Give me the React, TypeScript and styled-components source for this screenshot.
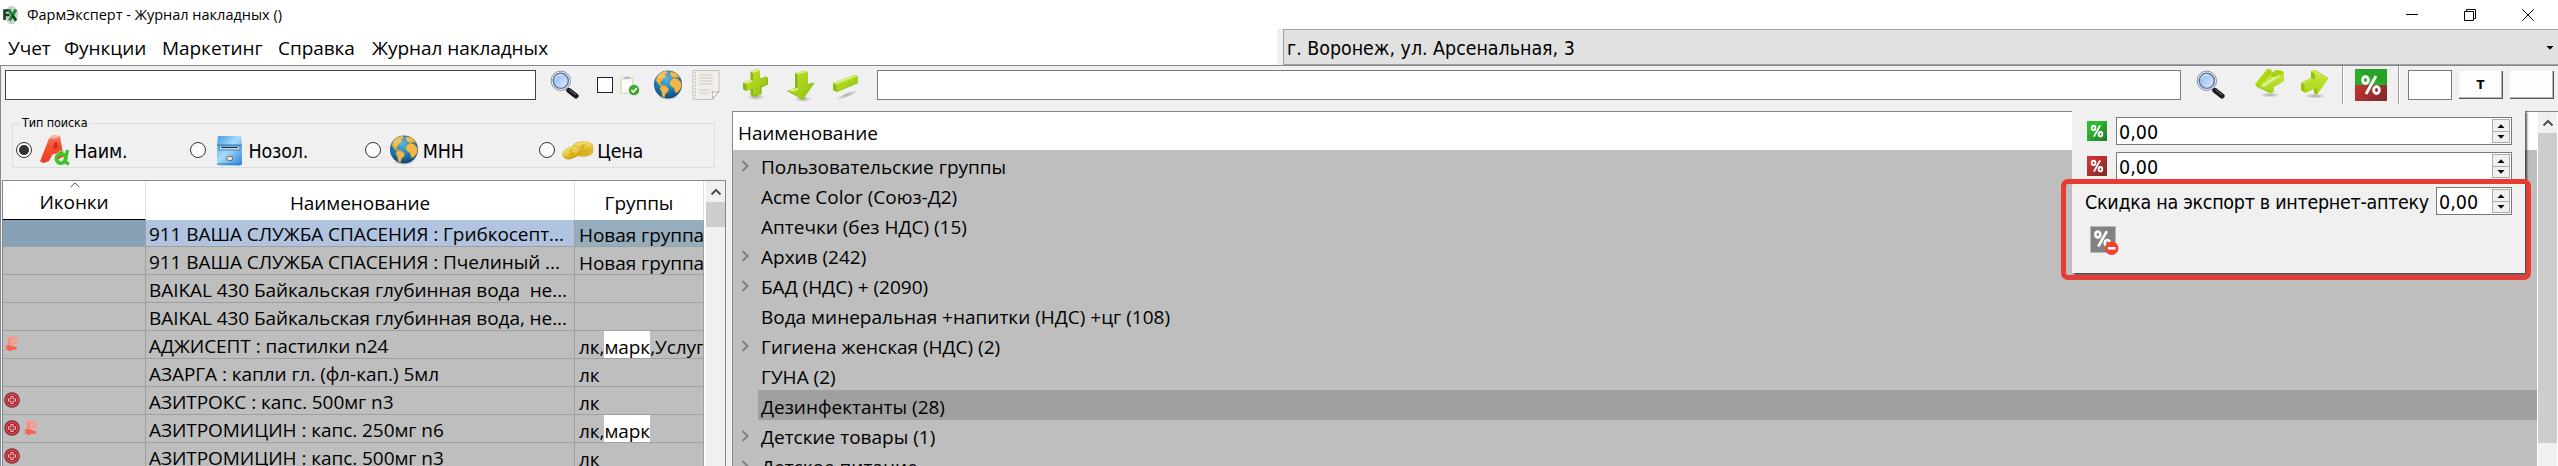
import React from "react";
import styled, { createGlobalStyle } from "styled-components";

const ui = `"Open Sans", "Noto Sans", sans-serif`;
const tahoma = `"DejaVu Sans Condensed", "DejaVu Sans", sans-serif`;
const line = "#828790";

const Global = createGlobalStyle`
  * { box-sizing: border-box; }
  body { margin: 0; background: #fff; color: #000; }
  svg { display: block; flex: none; }
`;

const Window = styled.div`
  position: relative;
  display: flex;
  flex-direction: column;
  width: 2558px;
  height: 466px;
  overflow: hidden;
  font-family: ${ui};
  font-size: 19px;
  white-space: pre;
`;

const TitleBar = styled.header`
  display: flex;
  align-items: center;
  height: 29px;
  padding-left: 3px;
  flex: none;
`;
const Title = styled.span`
  flex: 1;
  margin-left: 8px;
  font-size: 14.5px;
`;
const Controls = styled.div`
  display: flex;
  gap: 46px;
  padding-right: 24px;
`;

const MenuRow = styled.div`
  display: flex;
  height: 36px;
  flex: none;
`;
const Menu = styled.nav`
  display: flex;
  align-items: center;
  width: 1277px;
  padding: 2px 0 0 8px;
  letter-spacing: -0.05px;
`;
const MenuItem = styled.span<{ $w: number }>`
  width: ${(p) => p.$w}px;
`;
const Combo = styled.div`
  display: flex;
  flex: 1;
  align-items: center;
  justify-content: space-between;
  padding: 2px 4px 0 3px;
  background: #e1e1e1;
  border: 1px solid #a0a0a0;
  border-right: 0;
  outline: 6px solid #f0f0f0;
  clip-path: inset(0 0 0 -6px);
  margin-left: 6px;
  font-family: ${tahoma};
  font-size: 19.4px;
`;

const Body = styled.main`
  display: flex;
  flex-direction: column;
  flex: 1;
  min-height: 0;
  background: #f0f0f0;
  border-top: 1px solid ${line};
  border-left: 1px solid ${line};
`;
const Toolbar = styled.div`
  display: flex;
  align-items: flex-start;
  height: 45px;
  padding: 4px 0 0 4px;
  flex: none;
`;
const Field = styled.div<{ $w: number; $dark?: boolean }>`
  width: ${(p) => p.$w}px;
  height: 30px;
  background: #fff;
  border: 1px solid ${(p) => (p.$dark ? "#444" : "#7a7a7a")};
  flex: none;
`;
const Tool = styled.span<{ $gap: number; $top?: number }>`
  margin-left: ${(p) => p.$gap}px;
  margin-top: ${(p) => p.$top ?? 0}px;
  flex: none;
`;
const Check = styled.span`
  display: block;
  width: 16px;
  height: 16px;
  background: #fff;
  border: 1px solid #222;
`;
const Divider = styled.div`
  width: 2px;
  height: 38px;
  margin-top: -4px;
  background: #a0a0a0;
  border-right: 1px solid #fff;
`;
const PushButton = styled.div`
  display: flex;
  align-items: center;
  justify-content: center;
  width: 44px;
  height: 28px;
  margin: 1px 0 0 7px;
  background: #fdfdfd;
  border-right: 1px solid #555;
  border-bottom: 1px solid #555;
  box-shadow: inset -1px -1px #b4b4b4;
  font: bold 13px ${tahoma};
  flex: none;
`;

const Panels = styled.div`
  display: flex;
  flex: 1;
  min-height: 0;
`;
const Left = styled.section`
  display: flex;
  flex-direction: column;
  width: 731px;
  flex: none;
`;
const Group = styled.fieldset`
  display: flex;
  height: 54px;
  margin: 3px 17px 0 11px;
  padding: 0;
  border: 1px solid #dcdcdc;
  font-family: ${tahoma};
  font-size: 19.5px;
  letter-spacing: -0.15px;
  min-width: 0;
`;
const Legend = styled.legend`
  margin-left: 7px;
  padding: 0 2px;
  line-height: 18px;
  font-size: 12.5px;
  letter-spacing: -0.1px;
`;
const Option = styled.label`
  display: flex;
  align-items: center;
  width: 174.4px;
  height: 36px;
  padding-left: 3px;
  flex: none;
`;
const Radio = styled.span<{ $on?: boolean }>`
  width: 16px;
  height: 16px;
  border: 1px solid #333;
  border-radius: 50%;
  background: ${(p) => (p.$on ? "radial-gradient(circle, #333 4.6px, #fff 5.4px)" : "#fff")};
`;
const OptionIcon = styled.span`
  display: flex;
  justify-content: center;
  width: 32px;
  margin-left: 7px;
`;
const OptionText = styled.span`
  padding: 2px 0 0 3px;
`;

const Table = styled.div`
  display: grid;
  grid-template-columns: 1fr 19px;
  flex: 1;
  min-height: 0;
  margin: 12px 6px 0 1px;
  border: 1px solid ${line};
  border-bottom: 0;
  background: #fff;
`;
const Grid = styled.div`
  display: grid;
  grid-template-columns: 143px 429px 129px;
  grid-template-rows: 39px 27px;
  grid-auto-rows: 28px;
  width: 701px;
  min-height: 0;
  overflow: hidden;
  letter-spacing: -0.06px;
`;
const HeadCell = styled.div<{ $active?: boolean }>`
  position: relative;
  display: flex;
  align-items: center;
  justify-content: center;
  padding-top: 4px;
  background: #fff;
  border-right: 1px solid #e0e0e0;
  border-bottom: ${(p) => (p.$active ? "1px solid #000" : "0")};
`;
const SortMark = styled.span`
  position: absolute;
  top: 1px;
  left: 67px;
`;
const Cell = styled.div<{ $bg?: string; $drop?: number }>`
  display: flex;
  align-items: center;
  padding: ${(p) => p.$drop ?? 2}px 0 0 ${(p) => (p.$drop ? 4 : 3)}px;
  background: ${(p) => p.$bg ?? "#bebebe"};
  border-right: 1px solid #a0a0a0;
  border-bottom: 1px solid #a0a0a0;
  overflow: hidden;
`;
const IconCell = styled(Cell)`
  gap: 3px;
  padding: 0 0 1px 1px;
`;
const Mark = styled.span`
  display: flex;
  align-items: center;
  height: 28px;
  margin-top: -4px;
  padding-top: 4px;
  background: #fff;
`;

const Scroll = styled.div`
  display: flex;
  flex-direction: column;
  background: #f0f0f0;
`;
const ScrollButton = styled.div`
  display: flex;
  align-items: center;
  justify-content: center;
  height: 21px;
  flex: none;
`;
const Thumb = styled.div<{ $h: number }>`
  height: ${(p) => p.$h}px;
  background: #cdcdcd;
`;

const Tree = styled.section`
  display: grid;
  grid-template-columns: 1804px 1px 19px;
  flex: 1;
  border-top: 1px solid ${line};
  border-left: 1px solid ${line};
  background: #fff;
  min-height: 0;
  overflow: hidden;
`;
const TreeList = styled.div`
  background: #bebebe;
  min-height: 0;
`;
const TreeHead = styled.div`
  display: flex;
  align-items: center;
  height: 38px;
  padding: 3px 0 0 5px;
  background: #fff;
  letter-spacing: -0.1px;
`;
const TreeRow = styled.div`
  display: flex;
  height: 30px;
`;
const Twist = styled.span`
  width: 25px;
  padding: 10px 0 0 8px;
  flex: none;
`;
const TreeLabel = styled.span<{ $on?: boolean }>`
  display: flex;
  align-items: center;
  flex: 1;
  padding: 3px 0 0 3px;
  background: ${(p) => (p.$on ? "#a0a0a0" : "transparent")};
`;

const Popup = styled.aside`
  position: absolute;
  left: 2072px;
  top: 110px;
  display: flex;
  flex-direction: column;
  gap: 7px;
  width: 453px;
  height: 163px;
  padding: 7px 13px 0 15px;
  background: #f0f0f0;
  box-shadow: 2px 2px 2px rgba(0, 0, 0, 0.65);
  clip-path: inset(0 -6px -6px 0);
  font-family: ${tahoma};
  font-size: 19.5px;
`;
const PopupRow = styled.div`
  display: flex;
  align-items: center;
  justify-content: space-between;
  height: 28px;
  flex: none;
`;
const PopupText = styled.span`
  margin-left: -2px;
  padding-top: 2px;
  letter-spacing: -0.29px;
`;
const Spin = styled.div<{ $w: number }>`
  display: flex;
  justify-content: space-between;
  width: ${(p) => p.$w}px;
  height: 28px;
  padding: 1px;
  background: #fff;
  border: 1px solid #7a7a7a;
`;
const SpinValue = styled.span`
  padding-left: 1px;
  line-height: 27px;
`;
const SpinButtons = styled.span`
  display: grid;
  grid-template-rows: 1fr 1fr;
  width: 18px;
  border: 1px solid #acacac;
  background: #f0f0f0;
`;
const SpinButton = styled.span`
  display: flex;
  align-items: center;
  justify-content: center;
  & + & { border-top: 1px solid #acacac; }
`;
const PopupAction = styled.div`
  margin: 4px 0 0 3px;
`;
const Highlight = styled.div`
  position: absolute;
  left: 2061px;
  top: 179px;
  width: 470px;
  height: 101px;
  border: 5px solid #e63c31;
  border-radius: 7px;
`;
const Palette = styled.svg`
  position: absolute;
`;

const Defs = () => (
  <Palette width="0" height="0">
    <defs>
      <linearGradient id="lime" x1="0" y1="0" x2="1" y2="1">
        <stop offset="0" stopColor="#c3e52a" /><stop offset="1" stopColor="#8dbf12" />
      </linearGradient>
      <linearGradient id="limeLight" x1="0" y1="0" x2="0" y2="1">
        <stop offset="0" stopColor="#c9e645" /><stop offset="1" stopColor="#a8d414" />
      </linearGradient>
      <linearGradient id="gGreen" x1="0" y1="0" x2="1" y2="1">
        <stop offset="0.3" stopColor="#2fbb2f" /><stop offset="1" stopColor="#267326" />
      </linearGradient>
      <linearGradient id="gRed" x1="0" y1="0" x2="1" y2="1">
        <stop offset="0.2" stopColor="#cc3333" /><stop offset="1" stopColor="#7b2b2b" />
      </linearGradient>
      <radialGradient id="sea" cx="0.45" cy="0.35" r="0.65">
        <stop offset="0" stopColor="#3fb4dd" /><stop offset="0.6" stopColor="#1a79ac" /><stop offset="1" stopColor="#0c4a78" />
      </radialGradient>
      <linearGradient id="glass" x1="0" y1="0" x2="1" y2="1">
        <stop offset="0" stopColor="#8db4ea" /><stop offset="1" stopColor="#e2edfb" />
      </linearGradient>
      <linearGradient id="gold" x1="0" y1="0" x2="0" y2="1">
        <stop offset="0" stopColor="#fbe774" /><stop offset="1" stopColor="#d9ac17" />
      </linearGradient>
      <linearGradient id="cab" x1="0" y1="0" x2="1" y2="1">
        <stop offset="0" stopColor="#3f9fe8" /><stop offset="0.45" stopColor="#a9daf9" /><stop offset="1" stopColor="#2b83dc" />
      </linearGradient>
      <linearGradient id="aRed" x1="0" y1="0" x2="0" y2="1">
        <stop offset="0" stopColor="#f3806b" /><stop offset="0.4" stopColor="#f5502c" /><stop offset="1" stopColor="#ee3d22" />
      </linearGradient>
      <radialGradient id="shade"><stop offset="0" stopColor="#000" stopOpacity="0.3" /><stop offset="1" stopColor="#000" stopOpacity="0" /></radialGradient>
    </defs>
  </Palette>
);

const Logo = () => (
  <svg width="16" height="20" viewBox="0 0 16 20">
    <ellipse cx="8.5" cy="10" rx="6.6" ry="9.3" fill="#cfcfcf" />
    <path d="M1.5 15V5.5h6M1.5 10h5" fill="none" stroke="#123c1c" strokeWidth="2.6" />
    <path d="M6 5l7 10.5M13 4.5L6.5 15.5" fill="none" stroke="#178a37" strokeWidth="3" />
    <path d="M9 10l4 5.5" stroke="#0b3a18" strokeWidth="2" />
  </svg>
);
const Lens = () => (
  <svg width="30" height="30" viewBox="0 0 30 30">
    <path d="M16 18l3.500 3" stroke="#999" strokeWidth="3" />
    <path d="M19 20.500l7 5.500" stroke="#1d1d1d" strokeWidth="5.200" strokeLinecap="round" />
    <path d="M19.500 19.800l6.500 5" stroke="#777" strokeWidth="1" />
    <circle cx="10.800" cy="10.800" r="9.700" fill="#f6f6f6" stroke="#8d8d8d" strokeWidth="1" />
    <circle cx="10.800" cy="10.800" r="7.600" fill="url(#glass)" stroke="#4d75b4" strokeWidth="1.400" />
    <path d="M5 9a6 6 0 0 1 8-4" fill="none" stroke="#dceafc" strokeWidth="1.200" />
  </svg>
);
const Globe = ({ size }: { size: number }) => (
  <svg width={size} height={size} viewBox="0 0 30 30">
    <ellipse cx="15" cy="27" rx="11" ry="3" fill="url(#shade)" />
    <circle cx="15" cy="14.500" r="14" fill="url(#sea)" />
    <path d="M4 7C7 2.500 11 1 14 1l1 2-3 1 1 3-3 1.500-1 3-2 .5 1 2.500 3 1-1 1-4-2-3-4zM17 1.500l6 1.500 4 5-3-1-2 1-3-1-2-3zM18 10l3-2 4 1 3.500 4-.5 5-3 4-2.500 1-1.500-5-3-2-1.500-3zM8 16l4-.5 3.500 3-.5 3-2.500 2-1 4-2-1-1-5-1.500-3z" fill="#f3b649" stroke="#c98c25" strokeWidth=".4" />
    <ellipse cx="12" cy="6" rx="8" ry="4" fill="#fff" opacity=".14" />
  </svg>
);
const Clipboard = () => (
  <svg width="21" height="21" viewBox="0 0 21 21">
    <rect x="1" y="2" width="14" height="17" rx="1" fill="#eadfc0" />
    <path d="M2.500 4h11v14h-11z" fill="#fbfbf8" stroke="#d8d3c2" strokeWidth=".6" />
    <path d="M5 4V2h2l1-1.500L9 2h2v2z" fill="#bdbdbd" />
    <circle cx="15" cy="15" r="5.300" fill="#3faa3a" />
    <path d="M12.300 15l2 2 3.500-4" fill="none" stroke="#fff" strokeWidth="1.700" />
  </svg>
);
const Note = () => (
  <svg width="28" height="30" viewBox="0 0 28 30">
    <path d="M1 .5h26v21L20 29.500H1z" fill="#f1efec" stroke="#c4c1bb" strokeWidth="1" />
    <path d="M3.500 2v26" stroke="#a9a6a2" strokeWidth="1.200" strokeDasharray="1.200 2" />
    <path d="M7 5h12M7 8h14M7 11h13M7 14h14M7 20h11M7 23h9" stroke="#d3c4ba" strokeWidth="1" />
    <path d="M27 21.500c-3 1-5 1-7-.5 1 3 1 6 0 8.500z" fill="#fff" stroke="#aaa69f" strokeWidth=".9" />
  </svg>
);
const Plus = () => (
  <svg width="28" height="32" viewBox="0 0 28 32">
    <ellipse cx="15" cy="28" rx="9" ry="3" fill="url(#shade)" />
    <path d="M9.500 2.500L16 0l3 1.500v8l6-2L27 9v6.500l-6.500 3V25L13 28l-3.500-2v-5.500l-5 1.500-2.500-2V13.500l7.500-3z" fill="#8ab414" />
    <path d="M12 4l7-2.500v8.500l7-2.500v7l-7 3v7l-7 2.500v-7l-6.500 2V15l6.500-2.500z" fill="url(#lime)" />
    <path d="M9.500 2.500L16 0l3 1.500L12 4zM2 13.500l7.500-3 2.500 2L5.500 15z" fill="#dcf088" />
  </svg>
);
const Down = () => (
  <svg width="28" height="32" viewBox="0 0 28 32">
    <ellipse cx="16" cy="29" rx="9" ry="3" fill="url(#shade)" />
    <path d="M8 3l10-2.500 3 1.500v12l6-1.500L16 30 0 21l8-3z" fill="#86b612" />
    <path d="M10.500 4.500L21 2v13l6.500-2L16 29.500 1.500 20.500l9-2.500z" fill="url(#lime)" />
    <path d="M8 3l10-2.500L21 2l-10.500 2.500z" fill="#d9ef83" />
    <path d="M1 20l10-2v2l-5 1.500z" fill="#d9ef83" />
  </svg>
);
const Minus = () => (
  <svg width="27" height="28" viewBox="0 0 27 28">
    <ellipse cx="15" cy="21" rx="12" ry="2.500" fill="url(#shade)" transform="rotate(-22 15 21)" />
    <path d="M1 9L22 1l4 1v7L5 18l-4-2z" fill="#8dbb14" />
    <path d="M4.500 10.500L26 2v7L5 18z" fill="url(#lime)" />
    <path d="M1 9L22 1l4 1-21.500 8.500z" fill="#d6ee72" />
  </svg>
);
const Back = () => (
  <svg width="30" height="30" viewBox="0 0 30 30">
    <ellipse cx="15" cy="26" rx="10" ry="2.500" fill="url(#shade)" />
    <path d="M0 15.500L12.500 0l4 1v3l5-3L27 2l2 2.500V12l-10.500 6v5L15 24 3 18.500z" fill="#98ca10" />
    <path d="M4 16L16.500 3.500v5L29 4.500V12l-10.500 6v5.500L4 18.500z" fill="url(#limeLight)" />
    <path d="M0 15.500L12.500 0l4 1L4 16z" fill="#b2dc00" />
    <path d="M7.500 17L25 5.500" stroke="#dff196" strokeWidth="3" />
    <path d="M16.500 4l5-3L27 2l2 2.500-9 3.500z" fill="#a6d50c" />
  </svg>
);
const Forward = () => (
  <svg width="30" height="30" viewBox="0 0 30 30">
    <ellipse cx="15" cy="26" rx="11" ry="2.500" fill="url(#shade)" />
    <path d="M1 13l10-5V1l4-1 13.500 8L17 24.500l-3-1V18l-9.500 4.500L1 20z" fill="#8fc10f" />
    <path d="M4.500 14.500L15 10V2.500L28.500 8 17 24.500V18L4.500 23z" fill="url(#limeLight)" />
    <path d="M1 12.500L11 8l4 1.500-10.500 5z" fill="#bfe53b" />
    <path d="M11 1l3-1 14 8-13-4z" fill="#cdea50" />
  </svg>
);
const PercentStrokes = ({ width = 3 }: { width?: number }) => (
  <g fill="none" stroke="#fff" strokeWidth={width}>
    <ellipse cx="10.500" cy="11" rx="2.900" ry="3.500" />
    <ellipse cx="21.500" cy="21" rx="2.900" ry="3.500" />
    <path d="M21 7L11 25" />
  </g>
);
const PercentBox = ({ size, fill }: { size: number; fill: string }) => (
  <svg width={size} height={size} viewBox="0 0 32 32">
    <rect width="32" height="32" fill={fill} />
    <PercentStrokes />
  </svg>
);
const PercentSplit = () => (
  <svg width="32" height="32" viewBox="0 0 32 32">
    <rect width="32" height="32" fill="url(#gRed)" />
    <rect width="32" height="16" fill="#2bad2b" />
    <path d="M0 0h32v16z" fill="#1f8c1f" opacity=".35" />
    <PercentStrokes width={2.8} />
  </svg>
);
const PercentRemove = () => (
  <svg width="29" height="30" viewBox="0 0 29 30">
    <rect x=".5" y=".5" width="25" height="26" fill="#828282" stroke="#b9b9b9" />
    <g transform="translate(-1.200 -1) scale(.86)"><PercentStrokes /></g>
    <circle cx="21.700" cy="22.300" r="6.700" fill="#f93d2f" />
    <path d="M17.800 22.300h7.800" stroke="#fff" strokeWidth="2.600" />
  </svg>
);
const Letters = () => (
  <svg width="31" height="31" viewBox="0 0 31 31">
    <path d="M0 26.500L9 3.500 13 0l7 1 3.500 20.500-5.500 3-1.500-6-4 1L9 26l-5 2z" fill="url(#aRed)" />
    <path d="M14.500 7.500l2.500-.5.500 6-4.500 1z" fill="#c4301a" />
    <path d="M9 3.500L13 0l7 1-4 2.500z" fill="#f5b8ae" />
    <ellipse cx="21" cy="23.500" rx="4.600" ry="4.600" transform="rotate(25 21 23.500)" fill="none" stroke="#3cc62a" strokeWidth="3.800" />
    <path d="M27.500 15l-2.500 12 4 2.300" fill="none" stroke="#3cc62a" strokeWidth="3.400" />
    <path d="M16 20c1.500-3 4.500-4.500 8-4.200" stroke="#91ec7e" strokeWidth="1" fill="none" />
  </svg>
);
const Cabinet = () => (
  <svg width="27" height="31" viewBox="0 0 26 31" preserveAspectRatio="none">
    <path d="M2 1h22l1 9v19l-2 1.500H3L1 29V10z" fill="url(#cab)" />
    <path d="M1 10h24M1 29h24" stroke="#2277c4" strokeWidth="1" />
    <path d="M3 11h20v4H3z" fill="#c2e5fb" stroke="#3c6f9c" strokeWidth=".8" />
    <path d="M5 12.500h16" stroke="#24364a" strokeWidth="1.200" />
    <rect x="10.500" y="21.500" width="5.500" height="4" rx="1.500" fill="#e4e4e4" stroke="#5b5b5b" strokeWidth=".8" />
  </svg>
);
const Coins = () => (
  <svg width="32" height="19" viewBox="0 0 32 19">
    {[10.5, 8, 5.5].map((y) => (
      <ellipse key={y} cx="21" cy={y} rx="10" ry="4.800" fill="url(#gold)" stroke="#c89e18" strokeWidth=".6" />
    ))}
    <ellipse cx="9.500" cy="12.500" rx="9" ry="5.200" transform="rotate(-22 9.500 12.500)" fill="#c99a12" />
    <ellipse cx="9.200" cy="11.300" rx="9" ry="5.200" transform="rotate(-22 9.200 11.300)" fill="url(#gold)" stroke="#d2a51b" strokeWidth=".6" />
    <path d="M11 8.500c-4-.5-4 2.300-1.500 2.500s2 3-2 2.500" fill="none" stroke="#c39a17" strokeWidth="1" />
    <path d="M23 4c-3-.6-4 .8-2 1.300s1 1.800-2.500 1.300" fill="none" stroke="#c39a17" strokeWidth=".9" />
  </svg>
);
const Cross = () => (
  <svg width="16" height="16" viewBox="0 0 16 16">
    <circle cx="8" cy="8" r="7.800" fill="#8c2a2e" />
    <circle cx="8" cy="8" r="6" fill="#c01f2a" stroke="#d98a8c" strokeWidth=".7" />
    <path d="M8 4v8M4 8h8" stroke="#f0caca" strokeWidth="3" />
    <path d="M8 5v6M5 8h6" stroke="#b3262e" strokeWidth="1.300" />
  </svg>
);
const Rouble = () => (
  <svg width="15" height="16" viewBox="0 0 15 16">
    <path d="M3 2.200h7.500q2.300.2 1.800 2.500T9 7.800H6.500" fill="none" stroke="#fb9a8c" strokeWidth="3" />
    <path d="M6.300 2L4.500 10" stroke="#fb8a7a" strokeWidth="2.800" />
    <path d="M1 9.800l5-.6 7 2.300-.5 2.200H1.200l2-2z" fill="#f8604e" />
    <path d="M5 12l3 3H4.500z" fill="#f8604e" />
  </svg>
);
const Caret = ({ up }: { up?: boolean }) => (
  <svg width="8" height="4" viewBox="0 0 8 4">
    <path d={up ? "M.5 4h7L4 .2z" : "M.5 0h7L4 3.800z"} />
  </svg>
);
const ArrowUp = () => (
  <svg width="12" height="8" viewBox="0 0 12 8">
    <path d="M1.500 6.500L6 2l4.500 4.500" fill="none" stroke="#505050" strokeWidth="2" />
  </svg>
);

const products: { name: string; icons?: string; groups?: string[] }[] = [
  { name: "911 ВАША СЛУЖБА СПАСЕНИЯ : Грибкосепт...", groups: ["Новая группа"] },
  { name: "911 ВАША СЛУЖБА СПАСЕНИЯ : Пчелиный ...", groups: ["Новая группа"] },
  { name: "BAIKAL 430 Байкальская глубинная вода  не..." },
  { name: "BAIKAL 430 Байкальская глубинная вода, не..." },
  { name: "АДЖИСЕПТ : пастилки n24", icons: "r", groups: ["лк,", "марк", ",Услуг"] },
  { name: "АЗАРГА : капли гл. (фл-кап.) 5мл", groups: ["лк"] },
  { name: "АЗИТРОКС : капс. 500мг n3", icons: "c", groups: ["лк"] },
  { name: "АЗИТРОМИЦИН : капс. 250мг n6", icons: "cr", groups: ["лк,", "марк"] },
  { name: "АЗИТРОМИЦИН : капс. 500мг n3", icons: "c", groups: ["лк"] },
];

const tree: [string, boolean][] = [
  ["Пользовательские группы", true],
  ["Acme Color (Союз-Д2)", false],
  ["Аптечки (без НДС) (15)", false],
  ["Архив (242)", true],
  ["БАД (НДС) + (2090)", true],
  ["Вода минеральная +напитки (НДС) +цг (108)", false],
  ["Гигиена женская (НДС) (2)", true],
  ["ГУНА (2)", false],
  ["Дезинфектанты (28)", false],
  ["Детские товары (1)", true],
  ["Детское питание", true],
];

const SpinBox = ({ width }: { width: number }) => (
  <Spin $w={width}>
    <SpinValue>0,00</SpinValue>
    <SpinButtons>
      <SpinButton><Caret up /></SpinButton>
      <SpinButton><Caret /></SpinButton>
    </SpinButtons>
  </Spin>
);

export default function App() {
  return (
    <Window>
      <Global />
      <Defs />
      <TitleBar>
        <Logo />
        <Title>ФармЭксперт - Журнал накладных ()</Title>
        <Controls>
          <svg width="12" height="12"><path d="M0 5.500h12" stroke="#000" /></svg>
          <svg width="12" height="12"><path d="M.5 2.500h9v9h-9zM2.500 2.500v-2h9v9h-2" fill="none" stroke="#000" /></svg>
          <svg width="12" height="12"><path d="M.3.3l11.400 11.400M11.700.3L.3 11.700" stroke="#000" /></svg>
        </Controls>
      </TitleBar>
      <MenuRow>
        <Menu>
          <MenuItem $w={56}>Учет</MenuItem>
          <MenuItem $w={98}>Функции</MenuItem>
          <MenuItem $w={116}>Маркетинг</MenuItem>
          <MenuItem $w={94}>Справка</MenuItem>
          <MenuItem $w={180}>Журнал накладных</MenuItem>
        </Menu>
        <Combo>
          г. Воронеж, ул. Арсенальная, 3
          <Caret />
        </Combo>
      </MenuRow>
      <Body>
        <Toolbar>
          <Field $w={531} $dark />
          <Tool $gap={14}><Lens /></Tool>
          <Tool $gap={17} $top={7}><Check /></Tool>
          <Tool $gap={6} $top={5}><Clipboard /></Tool>
          <Tool $gap={13}><Globe size={30} /></Tool>
          <Tool $gap={9}><Note /></Tool>
          <Tool $gap={21} $top={-1}><Plus /></Tool>
          <Tool $gap={18}><Down /></Tool>
          <Tool $gap={17} $top={4}><Minus /></Tool>
          <Tool $gap={18}><Field $w={1304} /></Tool>
          <Tool $gap={15}><Lens /></Tool>
          <Tool $gap={29} $top={-1}><Back /></Tool>
          <Tool $gap={15}><Forward /></Tool>
          <Tool $gap={12}><Divider /></Tool>
          <Tool $gap={11} $top={-1}><PercentSplit /></Tool>
          <Tool $gap={11}><Divider /></Tool>
          <Tool $gap={8}><Field $w={44} /></Tool>
          <PushButton>Т</PushButton>
          <PushButton />
        </Toolbar>
        <Panels>
          <Left>
            <Group>
              <Legend>Тип поиска</Legend>
              <Option><Radio $on /><OptionIcon><Letters /></OptionIcon><OptionText>Наим.</OptionText></Option>
              <Option><Radio /><OptionIcon><Cabinet /></OptionIcon><OptionText>Нозол.</OptionText></Option>
              <Option><Radio /><OptionIcon><Globe size={30} /></OptionIcon><OptionText>МНН</OptionText></Option>
              <Option><Radio /><OptionIcon><Coins /></OptionIcon><OptionText>Цена</OptionText></Option>
            </Group>
            <Table>
              <Grid>
                <HeadCell $active>
                  <SortMark><svg width="10" height="6"><path d="M.5 5.200L5 1l4.500 4.200" fill="none" stroke="#555" /></svg></SortMark>
                  Иконки
                </HeadCell>
                <HeadCell>Наименование</HeadCell>
                <HeadCell>Группы</HeadCell>
                {products.map((p, i) => (
                  <React.Fragment key={p.name}>
                    <IconCell $bg={i ? undefined : "#87a2b6"}>
                      {[...(p.icons ?? "")].map((c) => (c === "c" ? <Cross key={c} /> : <Rouble key={c} />))}
                    </IconCell>
                    <Cell $bg={i ? undefined : "#b0c4e0"}>{p.name}</Cell>
                    <Cell $bg={i ? undefined : "#96adbd"} $drop={4}>
                      {p.groups?.map((g) => (g === "марк" ? <Mark key={g}>{g}</Mark> : <span key={g}>{g}</span>))}
                    </Cell>
                  </React.Fragment>
                ))}
              </Grid>
              <Scroll>
                <ScrollButton><ArrowUp /></ScrollButton>
                <Thumb $h={25} />
              </Scroll>
            </Table>
          </Left>
          <Tree>
            <TreeList>
              <TreeHead>Наименование</TreeHead>
              {tree.map(([label, branch]) => (
                <TreeRow key={label}>
                  <Twist>
                    {branch && <svg width="9" height="12"><path d="M1.500 1L6.500 6l-5 5" fill="none" stroke="#808080" strokeWidth="2" /></svg>}
                  </Twist>
                  <TreeLabel $on={label.startsWith("Дезинф")}>{label}</TreeLabel>
                </TreeRow>
              ))}
            </TreeList>
            <span />
            <Scroll>
              <ScrollButton><ArrowUp /></ScrollButton>
              <Thumb $h={310} />
            </Scroll>
          </Tree>
        </Panels>
      </Body>
      <Popup>
        <PopupRow><PercentBox size={20} fill="url(#gGreen)" /><SpinBox width={396} /></PopupRow>
        <PopupRow><PercentBox size={20} fill="url(#gRed)" /><SpinBox width={396} /></PopupRow>
        <PopupRow><PopupText>Скидка на экспорт в интернет-аптеку</PopupText><SpinBox width={76} /></PopupRow>
        <PopupAction><PercentRemove /></PopupAction>
      </Popup>
      <Highlight />
    </Window>
  );
}
